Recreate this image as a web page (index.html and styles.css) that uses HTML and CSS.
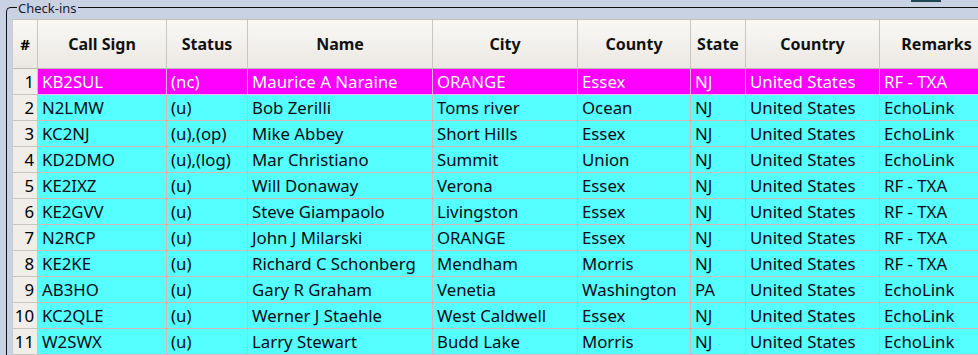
FILE: index.html
```html
<!DOCTYPE html>
<html>
<head>
<meta charset="utf-8">
<link rel="stylesheet" href="styles.css">
</head>
<body>
<div class="topbtn"></div>
<div class="groupbox">
  <div class="legend">Check-ins</div>
  <div class="grid">
    <div class="row head">
      <div class="c rh">#</div><div class="c">Call Sign</div><div class="c">Status</div><div class="c">Name</div><div class="c">City</div><div class="c">County</div><div class="c">State</div><div class="c">Country</div><div class="c">Remarks</div>
    </div>
    <div class="row sel">
      <div class="c rh">1</div><div class="c">KB2SUL</div><div class="c">(nc)</div><div class="c">Maurice A Naraine</div><div class="c">ORANGE</div><div class="c">Essex</div><div class="c">NJ</div><div class="c">United States</div><div class="c">RF - TXA</div>
    </div>
    <div class="row">
      <div class="c rh">2</div><div class="c">N2LMW</div><div class="c">(u)</div><div class="c">Bob Zerilli</div><div class="c">Toms river</div><div class="c">Ocean</div><div class="c">NJ</div><div class="c">United States</div><div class="c">EchoLink</div>
    </div>
    <div class="row">
      <div class="c rh">3</div><div class="c">KC2NJ</div><div class="c">(u),(op)</div><div class="c">Mike Abbey</div><div class="c">Short Hills</div><div class="c">Essex</div><div class="c">NJ</div><div class="c">United States</div><div class="c">EchoLink</div>
    </div>
    <div class="row">
      <div class="c rh">4</div><div class="c">KD2DMO</div><div class="c">(u),(log)</div><div class="c">Mar Christiano</div><div class="c">Summit</div><div class="c">Union</div><div class="c">NJ</div><div class="c">United States</div><div class="c">EchoLink</div>
    </div>
    <div class="row">
      <div class="c rh">5</div><div class="c">KE2IXZ</div><div class="c">(u)</div><div class="c">Will Donaway</div><div class="c">Verona</div><div class="c">Essex</div><div class="c">NJ</div><div class="c">United States</div><div class="c">RF - TXA</div>
    </div>
    <div class="row">
      <div class="c rh">6</div><div class="c">KE2GVV</div><div class="c">(u)</div><div class="c">Steve Giampaolo</div><div class="c">Livingston</div><div class="c">Essex</div><div class="c">NJ</div><div class="c">United States</div><div class="c">RF - TXA</div>
    </div>
    <div class="row">
      <div class="c rh">7</div><div class="c">N2RCP</div><div class="c">(u)</div><div class="c">John J Milarski</div><div class="c">ORANGE</div><div class="c">Essex</div><div class="c">NJ</div><div class="c">United States</div><div class="c">RF - TXA</div>
    </div>
    <div class="row">
      <div class="c rh">8</div><div class="c">KE2KE</div><div class="c">(u)</div><div class="c">Richard C Schonberg</div><div class="c">Mendham</div><div class="c">Morris</div><div class="c">NJ</div><div class="c">United States</div><div class="c">RF - TXA</div>
    </div>
    <div class="row">
      <div class="c rh">9</div><div class="c">AB3HO</div><div class="c">(u)</div><div class="c">Gary R Graham</div><div class="c">Venetia</div><div class="c">Washington</div><div class="c">PA</div><div class="c">United States</div><div class="c">EchoLink</div>
    </div>
    <div class="row">
      <div class="c rh">10</div><div class="c">KC2QLE</div><div class="c">(u)</div><div class="c">Werner J Staehle</div><div class="c">West Caldwell</div><div class="c">Essex</div><div class="c">NJ</div><div class="c">United States</div><div class="c">EchoLink</div>
    </div>
    <div class="row">
      <div class="c rh">11</div><div class="c">W2SWX</div><div class="c">(u)</div><div class="c">Larry Stewart</div><div class="c">Budd Lake</div><div class="c">Morris</div><div class="c">NJ</div><div class="c">United States</div><div class="c">EchoLink</div>
    </div>
  </div>
</div>
</body>
</html>
```
FILE: styles.css
```css
html, body {
  margin: 0;
  padding: 0;
}
body {
  width: 978px;
  height: 355px;
  overflow: hidden;
  background: #c9d2e3;
  font-family: "Noto Sans", "Open Sans", sans-serif;
  position: relative;
}
.topbtn {
  position: absolute;
  left: 911px;
  top: 0;
  width: 30px;
  height: 2px;
  background: #1d4653;
}
.groupbox {
  position: relative;
  margin: 7px 0 0 6px;
  border-top: 1px solid #111;
  border-left: 1px solid #111;
  border-top-left-radius: 5px;
  padding: 11px 0 0 5px;
}
.legend {
  position: absolute;
  top: -7px;
  left: 10px;
  padding: 0 1px;
  background: #c9d2e3;
  font-size: 13px;
  line-height: 14px;
  color: #1a1a30;
}
.grid {
  width: 966px;
  overflow: hidden;
  border-left: 1px solid #cfcbc6;
}
.row {
  display: grid;
  grid-template-columns: 25px 129px 81px 185px 145px 113px 55px 134px 114px;
  height: 26px;
  background: #55ffff;
  color: #0a0a14;
  font-size: 16.8px;
}
.c {
  box-sizing: border-box;
  border-right: 1px solid #d8b8b8;
  border-bottom: 1px solid #d8b8b8;
  padding: 0 3px 0 4px;
  line-height: 25px;
  white-space: nowrap;
  overflow: hidden;
}
.row .rh {
  background: #f1eeea;
  border-right-color: #c9c5c0;
  border-bottom-color: #c9c5c0;
  text-align: right;
  padding: 0 3px 0 0;
  color: #000;
}
.row.sel {
  background: #ff00ff;
  color: #ffffff;
}
.row.sel .c {
  border-right-color: #f3b4f3;
  border-bottom-color: #f3b4f3;
}
.row.sel .rh {
  color: #000;
  border-right-color: #c9c5c0;
  border-bottom-color: #c9c5c0;
}
.row.head {
  height: 50px;
  background: linear-gradient(#faf8f5, #ebe8e3);
  border-top: 1px solid #c2beb9;
  box-sizing: border-box;
  font-weight: bold;
  font-size: 16px;
  color: #111;
}
.row.head .c {
  border-right-color: #c9c5c0;
  border-bottom-color: #bdb9b4;
  line-height: 48px;
  text-align: center;
  padding: 0;
}
.row.head .rh {
  background: transparent;
  text-align: center;
  font-size: 15px;
}
```
